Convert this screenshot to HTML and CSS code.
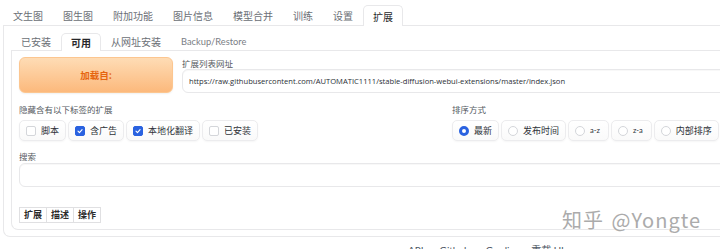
FILE: index.html
```html
<!DOCTYPE html>
<html lang="zh">
<head>
<meta charset="utf-8">
<link rel="stylesheet" href="styles.css">
</head>
<body>
<div class="page">
  <nav class="tabs main-tabs">
    <span class="tab">文生图</span>
    <span class="tab">图生图</span>
    <span class="tab">附加功能</span>
    <span class="tab">图片信息</span>
    <span class="tab">模型合并</span>
    <span class="tab">训练</span>
    <span class="tab">设置</span>
    <span class="tab active">扩展</span>
  </nav>
  <div class="panel outer">
    <nav class="tabs sub-tabs">
      <span class="tab">已安装</span>
      <span class="tab active">可用</span>
      <span class="tab">从网址安装</span>
      <span class="tab latin">Backup/Restore</span>
    </nav>
    <div class="panel inner">
      <div class="load-row">
        <button class="load-btn">加载自:</button>
        <div class="field url-field">
          <div class="label">扩展列表网址</div>
          <div class="input url-input">https://raw.githubusercontent.com/AUTOMATIC1111/stable-diffusion-webui-extensions/master/index.json</div>
        </div>
      </div>
      <div class="filter-row">
        <div class="field hide-field">
          <div class="label">隐藏含有以下标签的扩展</div>
          <div class="options">
            <span class="opt"><span class="check"></span>脚本</span>
            <span class="opt"><span class="check on"><svg viewBox="0 0 10 10"><polyline points="2.5,5.2 4.3,7 7.6,3.2" /></svg></span>含广告</span>
            <span class="opt"><span class="check on"><svg viewBox="0 0 10 10"><polyline points="2.5,5.2 4.3,7 7.6,3.2" /></svg></span>本地化翻译</span>
            <span class="opt"><span class="check"></span>已安装</span>
          </div>
        </div>
        <div class="field sort-field">
          <div class="label">排序方式</div>
          <div class="options">
            <span class="opt"><span class="radio on"></span>最新</span>
            <span class="opt"><span class="radio"></span>发布时间</span>
            <span class="opt small"><span class="radio"></span>a-z</span>
            <span class="opt small"><span class="radio"></span>z-a</span>
            <span class="opt"><span class="radio"></span>内部排序</span>
          </div>
        </div>
      </div>
      <div class="field search-field">
        <div class="label">搜索</div>
        <div class="input search-input"></div>
      </div>
      <table class="ext-table">
        <tr><th>扩展</th><th>描述</th><th>操作</th></tr>
      </table>
    </div>
  </div>
  <footer class="footer">API&nbsp;&nbsp;•&nbsp;&nbsp;Github&nbsp;&nbsp;•&nbsp;&nbsp;Gradio&nbsp;&nbsp;•&nbsp;&nbsp;重载 UI</footer>
  <div class="watermark">知乎 @Yongte</div>
</div>
</body>
</html>
```
FILE: styles.css
```css
html, body {
  margin: 0;
  padding: 0;
  background: #fff;
  overflow: hidden;
}
body {
  width: 720px;
  height: 249px;
  font-family: "Lato", "Noto Sans CJK SC", sans-serif;
  color: #374151;
}
.page {
  position: relative;
  width: 800px;
}
.tabs {
  display: flex;
  border-bottom: 1px solid #e8e8ea;
}
.main-tabs {
  margin: 5px 0 0 3px;
  height: 20px;
}
.tab {
  display: flex;
  align-items: center;
  padding: 0 10px;
  font-size: 10px;
  color: #6b6f76;
  white-space: nowrap;
}
.tab.active {
  color: #27272a;
  background: #fff;
  border: 1px solid #e8e8ea;
  border-bottom: none;
  border-radius: 5px 5px 0 0;
  margin-bottom: -1px;
  padding: 0 9px;
}
.tab.latin {
  font-size: 9.3px;
  color: #7a7e85;
}
.panel {
  border: 1px solid #e8e8ea;
  border-top: none;
  border-radius: 0 0 7px 7px;
}
.outer {
  margin-left: 3px;
  padding: 7px 7px 6px 7px;
}
.sub-tabs {
  height: 17px;
}
.sub-tabs .tab.active {
  font-weight: 600;
}
.inner {
  padding: 6px 7px 6px 7px;
}
.load-row {
  display: flex;
  gap: 9px;
  height: 36px;
}
.load-btn {
  width: 154px;
  height: 36px;
  border: 1px solid #fcc690;
  border-radius: 6px;
  background: linear-gradient(to bottom, #fedcb5, #fcb97c);
  color: #e5650f;
  font-family: "Noto Sans CJK SC", sans-serif;
  font-weight: 700;
  font-size: 9.5px;
  padding: 0;
  box-shadow: 0 1px 2px rgba(0,0,0,0.06);
}
.field {
  display: flex;
  flex-direction: column;
}
.url-field {
  flex: 1;
}
.label {
  font-family: "Noto Sans CJK SC", sans-serif;
  font-size: 8.5px;
  line-height: 12px;
  color: #555a61;
  height: 12px;
}
.input {
  border: 1px solid #e8e8ea;
  border-radius: 6px;
  background: #fff;
  box-shadow: inset 0 1px 1px rgba(0,0,0,0.03);
}
.url-input {
  height: 22px;
  display: flex;
  align-items: center;
  padding-left: 6px;
  font-family: "Open Sans", sans-serif;
  font-size: 7.6px;
  color: #2b2f36;
  white-space: nowrap;
}
.filter-row {
  display: flex;
  margin-top: 10px;
}
.hide-field {
  width: 433px;
}
.options {
  display: flex;
  gap: 2px;
  margin-top: 5px;
}
.opt {
  display: flex;
  align-items: center;
  gap: 5px;
  height: 19px;
  padding: 0 6px;
  border: 1px solid #ececee;
  border-radius: 5px;
  background: linear-gradient(to bottom, #ffffff, #fafafa);
  box-shadow: 0 1px 2px rgba(0,0,0,0.04);
  font-family: "Noto Sans CJK SC", sans-serif;
  font-size: 9px;
  color: #2f3339;
}
.opt.small {
  font-family: "Lato", sans-serif;
  font-size: 7.5px;
  padding-right: 8px;
}
.check {
  width: 8px;
  height: 8px;
  border: 1px solid #d4d6da;
  border-radius: 2px;
  background: #fff;
  display: flex;
}
.check.on {
  background: #2a62e0;
  border-color: #2a62e0;
}
.check svg {
  width: 8px;
  height: 8px;
  fill: none;
  stroke: #fff;
  stroke-width: 1.4;
  stroke-linecap: round;
  stroke-linejoin: round;
}
.radio {
  width: 8px;
  height: 8px;
  border: 1px solid #d4d6da;
  border-radius: 50%;
  background: #fff;
}
.radio.on {
  width: 4px;
  height: 4px;
  border: 3px solid #2a62e0;
}
.sort-field .opt {
  gap: 5px;
}
.search-field {
  margin-top: 9px;
}
.search-input {
  height: 22px;
  margin-top: 1px;
}
.ext-table {
  margin-top: 20px;
  border-collapse: collapse;
}
.ext-table th {
  height: 14px;
  padding: 0 4px;
  border: 1px solid #e0e0e2;
  font-family: "Noto Sans CJK SC", sans-serif;
  font-size: 9px;
  font-weight: 700;
  color: #2b2b2b;
  line-height: 14px;
}
.footer {
  margin-top: 7px;
  padding-left: 408px;
  font-size: 10px;
  line-height: 12px;
  color: #4b5563;
  white-space: nowrap;
}
.watermark {
  position: absolute;
  left: 562px;
  top: 202px;
  font-family: "Noto Sans CJK SC", sans-serif;
  font-size: 20px;
  line-height: 26px;
  color: #ababab;
  text-shadow: 0 0 2px #fff, 0 0 1px #fff;
  letter-spacing: 1px;
  word-spacing: 2px;
}
```
